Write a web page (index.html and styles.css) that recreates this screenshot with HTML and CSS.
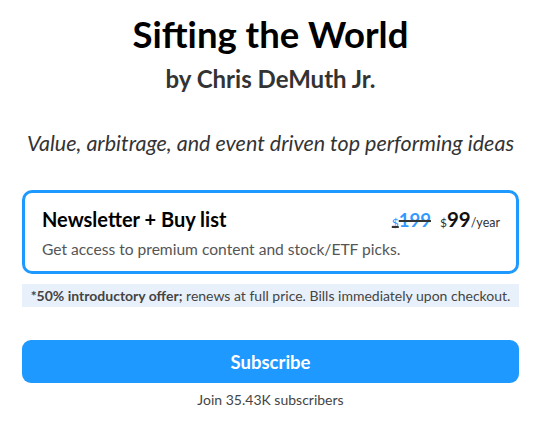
FILE: index.html
```html
<!DOCTYPE html>
<html>
<head>
<meta charset="utf-8">
<link rel="stylesheet" href="styles.css">
</head>
<body>
<div class="page">
  <h1 class="title">Sifting the World</h1>
  <h2 class="author">by Chris DeMuth Jr.</h2>
  <p class="tagline">Value, arbitrage, and event driven top performing ideas</p>
  <div class="plan">
    <div class="plan-row">
      <div class="plan-name">Newsletter + Buy list</div>
      <div class="price">
        <span class="old"><span class="cur">$</span>199</span>
        <span class="new"><span class="cur">$</span>99</span><span class="per">/year</span>
      </div>
    </div>
    <div class="plan-desc">Get access to premium content and stock/ETF picks.</div>
  </div>
  <div class="note"><b>*50% introductory offer;</b> renews at full price. Bills immediately upon checkout.</div>
  <button class="subscribe">Subscribe</button>
  <div class="join">Join 35.43K subscribers</div>
</div>
</body>
</html>
```
FILE: styles.css
```css
* { box-sizing: border-box; }
html, body { margin: 0; padding: 0; background: #fff; }
body { font-family: Lato, "Noto Sans", sans-serif; color: #111; }
.page { padding: 0 22px; display: flex; flex-direction: column; align-items: stretch; }
.title { margin: 12px 0 0; font-size: 36.5px; line-height: 44px; font-weight: 700; text-align: center; color: #000; }
.author { margin: 8px 0 0; font-size: 24px; line-height: 30px; font-weight: 700; text-align: center; color: #333; }
.tagline { margin: 35px 0 0; font-size: 21.5px; line-height: 28px; font-style: italic; text-align: center; color: #333; }
.plan { margin-top: 33px; border: 3px solid #1e99ff; border-radius: 10px; padding: 13px 16px 12px 17px; }
.plan-row { display: flex; justify-content: space-between; align-items: baseline; }
.plan-name { font-size: 20px; font-weight: 700; color: #000; line-height: 26px; }
.price { display: flex; align-items: baseline; gap: 0; }
.old { font-size: 18.5px; font-weight: 700; color: #3399ff; text-decoration: line-through; text-decoration-color: #333; text-decoration-thickness: 2px; margin-right: 9px; }
.cur { font-size: 12px; font-weight: 400; color: inherit; }
.new { font-size: 20.5px; font-weight: 700; color: #111; }
.new .cur { color: #333; }
.per { font-size: 12.5px; color: #333; }
.plan-desc { margin-top: 7px; font-size: 15.6px; color: #555; line-height: 20px; }
.note { margin-top: 10px; background: #e8f1fb; padding: 3px 0; text-align: center; font-size: 14px; line-height: 17px; color: #444; }
.note b { color: #444; }
.subscribe { margin-top: 33px; height: 43px; border: none; border-radius: 9px; background: #1e99ff; color: #fff; font-family: Lato, sans-serif; font-size: 18.5px; font-weight: 700; cursor: pointer; }
.join { margin-top: 8px; text-align: center; font-size: 14px; color: #444; line-height: 18px; }
```
